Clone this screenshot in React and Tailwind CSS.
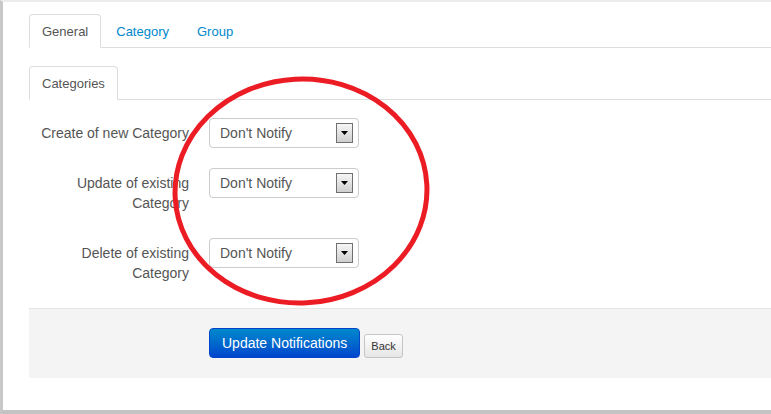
import React from "react";

const SelectBox = () => (
  <div className="w-[150px] h-[30px] flex items-center justify-between pl-[10px] pr-[5px] border border-[#cccccc] rounded-[4px] bg-white">
    <span className="text-[14px] text-[#555555]">Don't Notify</span>
    <div className="w-[17px] h-[20px] flex items-center justify-center border border-[#707070] bg-gradient-to-b from-[#f6f6f6] to-[#cfcfcf]">
      <svg width="7" height="4" viewBox="0 0 7 4">
        <path d="M0 0 H7 L3.5 4 Z" fill="#000" />
      </svg>
    </div>
  </div>
);

const Row = ({ label, last }) => (
  <div className={`flex items-start ${last ? "" : "mb-5"}`}>
    <label className="w-[160px] text-right py-[5px] leading-5 text-[14px] text-[#555555]">
      {label}
    </label>
    <div className="ml-5">
      <SelectBox />
    </div>
  </div>
);

const App = () => {
  const rows = [
    "Create of new Category",
    "Update of existing Category",
    "Delete of existing Category",
  ];

  return (
    <div className="relative w-[771px] h-[414px] overflow-hidden bg-white font-['Liberation_Sans',Arial,sans-serif]">
      <div className="h-full border-t-2 border-t-[#ececec] border-l-[3px] border-l-[#c8c8c8] border-b-4 border-b-[#c3c3c3] pl-[26px] pt-3">
        {/* top tabs */}
        <ul className="flex border-b border-[#dddddd] text-[13px]">
          <li className="-mb-px mr-[2px] px-3 pt-[8px] pb-[6px] leading-[18px] border border-[#dddddd] border-b-white rounded-t-[4px] bg-white text-[#555555]">
            General
          </li>
          <li className="-mb-px mr-[2px] px-3 pt-[8px] pb-[6px] leading-[18px] border border-transparent text-[#0088cc]">
            Category
          </li>
          <li className="-mb-px mr-[2px] px-3 pt-[8px] pb-[6px] leading-[18px] border border-transparent text-[#0088cc]">
            Group
          </li>
        </ul>

        {/* sub tabs */}
        <ul className="flex border-b border-[#dddddd] text-[13px] mt-[18px]">
          <li className="-mb-px px-3 pt-[8px] pb-[6px] leading-[18px] border border-[#dddddd] border-b-white rounded-t-[4px] bg-white text-[#555555]">
            Categories
          </li>
        </ul>

        <form className="mt-[18px]">
          {rows.map((r, i) => (
            <Row key={r} label={r} last={i === rows.length - 1} />
          ))}

          <div className="mt-5 flex items-end border-t border-[#e5e5e5] bg-[#f4f4f4] pl-[180px] pt-[19px] pb-5">
            <button
              type="button"
              className="h-[30px] px-3 text-[14px] text-white rounded-[4px] border border-[#0044cc] bg-gradient-to-b from-[#0088cc] to-[#0044cc]"
            >
              Update Notifications
            </button>
            <button
              type="button"
              className="ml-1 h-[24px] px-[6px] text-[11px] text-[#333333] rounded-[3px] border border-[#c5c5c5] bg-gradient-to-b from-white to-[#e6e6e6]"
            >
              Back
            </button>
          </div>
        </form>
      </div>

      {/* red annotation */}
      <svg className="absolute left-0 top-0 pointer-events-none" width="771" height="414">
        <ellipse
          cx="301"
          cy="191"
          rx="126"
          ry="112"
          transform="rotate(-3 301 191)"
          fill="none"
          stroke="#ec1c24"
          strokeWidth="5"
        />
      </svg>
    </div>
  );
};

export default App;
